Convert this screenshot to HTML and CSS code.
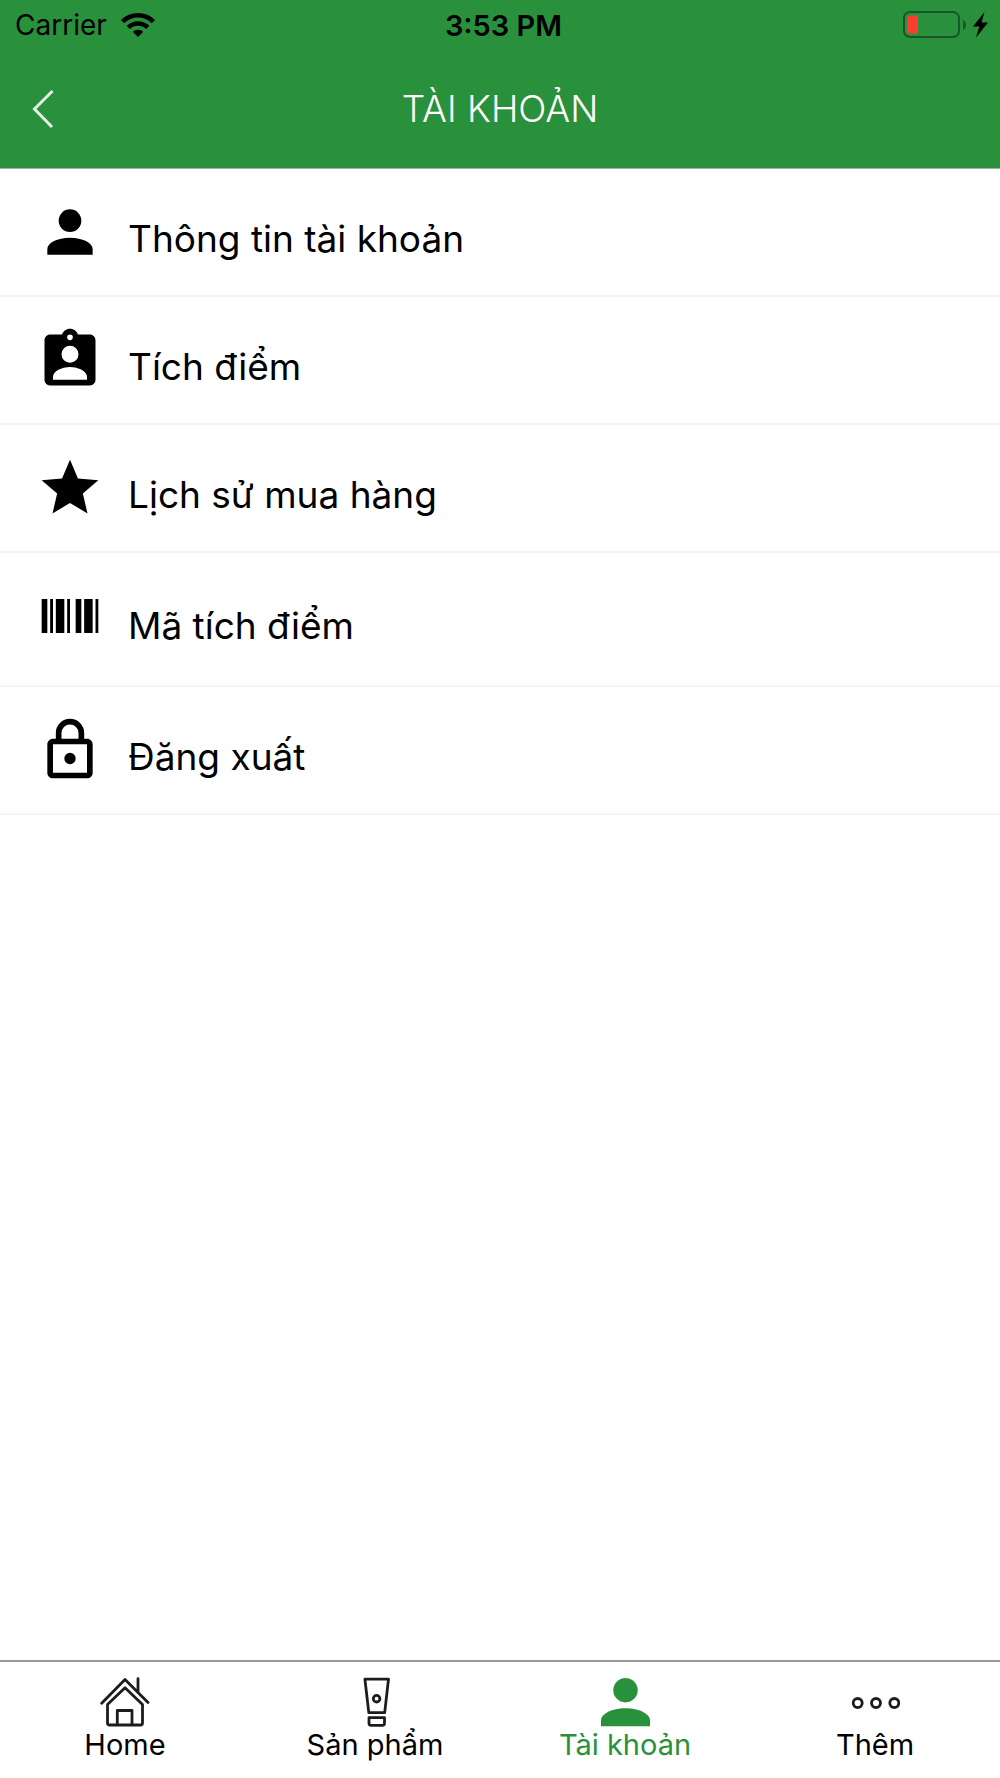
FILE: index.html
```html
<!DOCTYPE html>
<html lang="vi">
<head>
<meta charset="utf-8">
<meta name="viewport" content="width=device-width, initial-scale=1">
<title>Tài khoản</title>
<link rel="stylesheet" href="styles.css">
</head>
<body>
<header class="header">
  <div class="status">
    <div class="status-left">
      <span>Carrier</span>
      <svg class="wifi" viewBox="0 0 34 24" aria-hidden="true">
        <path fill="none" stroke="#000" stroke-width="4.6" d="M1.6 8.6A22 22 0 0 1 32.4 8.6M7.3 14.4A14 14 0 0 1 26.7 14.4"/>
        <path d="M17 24l-5.2-5.200a7.400 7.400 0 0 1 10.400 0z"/>
      </svg>
    </div>
    <time class="status-time">3:53 PM</time>
    <div class="status-right">
      <svg class="battery" viewBox="0 0 86 28" aria-hidden="true">
        <rect x="1" y="1" width="55" height="25" rx="6" fill="none" stroke="#18562a" stroke-width="2"/>
        <path fill="#ff3b30" d="M7 4.500h8v18H7a3 3 0 0 1-3-3v-12a3 3 0 0 1 3-3z"/>
        <path fill="#18562a" d="M60 9c4 1.500 4 8.500 0 10z"/>
        <path d="M81.500 1L70 15.500h6.300L73 26.500 85 11.500h-6.500z"/>
      </svg>
    </div>
  </div>
  <div class="nav">
    <button class="back" type="button" aria-label="Quay lại">
      <svg class="back-icon" viewBox="0 0 22 40" aria-hidden="true"><path d="M20.500 2L2.500 20l17.500 18"/></svg>
    </button>
    <h1 class="title">TÀI KHOẢN</h1>
  </div>
</header>

<main class="content">
  <ul class="menu">
    <li><a class="menu-item" href="#info">
      <svg class="menu-icon" viewBox="0 0 24 24" aria-hidden="true"><path d="M12 4a4 4 0 1 1 0 8 4 4 0 0 1 0-8zm0 10c4.420 0 8 1.790 8 4v2H4v-2c0-2.210 3.580-4 8-4z"/></svg>
      <span class="menu-label">Thông tin tài khoản</span></a></li>
    <li><a class="menu-item" href="#points">
      <svg class="menu-icon" viewBox="0 0 24 24" aria-hidden="true"><path fill-rule="evenodd" d="M19 3h-4.180C14.400 1.840 13.300 1 12 1s-2.400.84-2.820 2H5c-1.100 0-2 .9-2 2v14c0 1.100.9 2 2 2h14c1.100 0 2-.9 2-2V5c0-1.100-.9-2-2-2zm-7 0a1 1 0 1 1 0 2 1 1 0 0 1 0-2zm0 4a3 3 0 1 1 0 6 3 3 0 0 1 0-6zm6 12H6v-1c0-2 3-3.500 6-3.500s6 1.500 6 3.500z"/></svg>
      <span class="menu-label">Tích điểm</span></a></li>
    <li><a class="menu-item" href="#history">
      <svg class="menu-icon" viewBox="0 0 24 24" aria-hidden="true"><path d="M12 17.270L18.180 21l-1.640-7.030L22 9.240l-7.190-.61L12 2 9.190 8.630 2 9.240l5.460 4.730L5.820 21z"/></svg>
      <span class="menu-label">Lịch sử mua hàng</span></a></li>
    <li><a class="menu-item" href="#barcode">
      <span class="menu-icon-raised"><svg class="menu-icon" viewBox="0 0 24 24" aria-hidden="true"><path d="M2 6h2v12H2zM5 6h1v12H5zM7 6h3v12H7zM11 6h1v12h-1zM14 6h2v12h-2zM17 6h3v12h-3zM21 6h1v12h-1z"/></svg></span>
      <span class="menu-label">Mã tích điểm</span></a></li>
    <li><a class="menu-item" href="#logout">
      <svg class="menu-icon" viewBox="0 0 24 24" aria-hidden="true"><path fill-rule="evenodd" d="M12 13a2 2 0 1 1 0 4 2 2 0 0 1 0-4zM18 8h-1V6A5 5 0 0 0 7 6v2H6c-1.100 0-2 .9-2 2v10c0 1.100.9 2 2 2h12c1.100 0 2-.9 2-2V10c0-1.100-.9-2-2-2zM9 6a3 3 0 0 1 6 0v2H9zM18 20H6V10h12z"/></svg>
      <span class="menu-label">Đăng xuất</span></a></li>
  </ul>
</main>

<nav class="tabs">
  <a class="tab" href="#home">
    <svg class="tab-icon tab-icon-line" viewBox="0 0 50 50" aria-hidden="true"><path d="M1.700 26.200L25 2.600l23 23M38 1.700v13M7.500 27.500L25 10.800l17.500 16.700V46q0 2-2 2h-31q-2 0-2-2zM17.300 48V33.500H32V48"/></svg>
    <span>Home</span></a>
  <a class="tab" href="#products">
    <svg class="tab-icon tab-icon-line" viewBox="0 0 50 50" aria-hidden="true"><path d="M14.900 2.200h23.600L34.700 35.600H18.800zM19 40.700h15.500v5.600q0 2-2 2H21q-2 0-2-2z"/><circle cx="26.600" cy="21.700" r="3.300"/></svg>
    <span>Sản phẩm</span></a>
  <a class="tab tab-active" href="#account" aria-current="page">
    <svg class="tab-icon" viewBox="0 0 50 50" aria-hidden="true"><circle cx="25.500" cy="13.200" r="12.200"/><path d="M25.500 31.300c13.500 0 24.500 5.500 24.500 12.200v5.700H1v-5.700c0-6.700 11-12.200 24.500-12.200z"/></svg>
    <span>Tài khoản</span></a>
  <a class="tab" href="#more">
    <svg class="tab-icon tab-icon-line" viewBox="0 0 50 50" aria-hidden="true"><circle cx="7.700" cy="26" r="4.500"/><circle cx="26" cy="26" r="4.500"/><circle cx="44.300" cy="26" r="4.500"/></svg>
    <span>Thêm</span></a>
</nav>
</body>
</html>
```
FILE: styles.css
```css
* {
  box-sizing: border-box;
}

body {
  display: flex;
  flex-direction: column;
  min-height: 100vh;
  margin: 0;
  background: #fff;
  color: #000;
  font-family: Inter, "Liberation Sans", sans-serif;
}

svg {
  display: block;
  flex: none;
}

a {
  color: inherit;
  text-decoration: none;
}

.header {
  background: #29903b;
  border-bottom: 1px solid #a3aea5;
}

.status {
  display: grid;
  grid-template-columns: 1fr auto 1fr;
  align-items: center;
  height: 50px;
  padding: 0 8px 0 15px;
  font-size: 28px;
}

.status-left {
  display: flex;
  align-items: center;
  gap: 14px;
}

.wifi {
  width: 34px;
  height: 24px;
}

.status-time {
  font-size: 29px;
  font-weight: 600;
}

.status-right {
  display: flex;
  justify-content: flex-end;
  padding-right: 3px;
}

.battery {
  width: 86px;
  height: 28px;
}

.nav {
  display: grid;
  grid-template-columns: 1fr auto 1fr;
  align-items: center;
  height: 118px;
  padding: 0 16px;
}

.back {
  justify-self: start;
  padding: 16px;
  border: 0;
  background: none;
}

.back-icon {
  width: 22px;
  height: 40px;
  fill: none;
  stroke: #e4f1e6;
  stroke-width: 3;
}

.title {
  margin: 0;
  padding-bottom: 2px;
  color: #fff;
  font-size: 37px;
  font-weight: 300;
}

.content {
  flex: 1;
}

.menu {
  margin: 0;
  padding: 0;
  list-style: none;
}

.menu-item {
  display: flex;
  align-items: center;
  gap: 24px;
  padding: 29px 36px;
  border-bottom: 2px solid #f4f4f4;
  font-size: 37px;
}

.menu-icon {
  width: 68px;
  height: 68px;
}

.menu-icon-raised {
  padding-bottom: 6px;
}

.menu-label {
  padding-top: 12px;
}

.tabs {
  display: grid;
  grid-template-columns: repeat(4, 1fr);
  border-top: 2px solid #999;
}

.tab {
  display: flex;
  flex-direction: column;
  align-items: center;
  padding: 15px 0 16px;
  font-size: 29px;
  line-height: 35px;
}

.tab-active {
  color: #29903b;
}

.tab-icon {
  width: 50px;
  height: 50px;
  fill: currentColor;
}

.tab-icon-line {
  fill: none;
  stroke: #1c1c1c;
  stroke-width: 2.8;
  stroke-linecap: round;
  stroke-linejoin: round;
}
```
